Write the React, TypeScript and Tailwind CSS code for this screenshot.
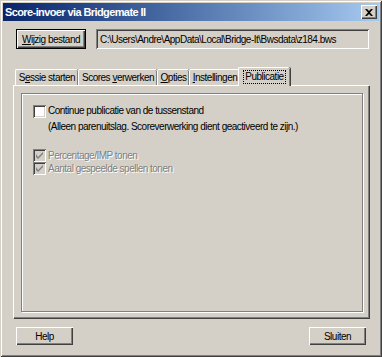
import React from 'react'

const font = "font-['Liberation_Sans',Arial,sans-serif] text-[10px] tracking-[-0.5px]"

const raised =
  'shadow-[inset_1px_1px_0_#ffffff,inset_-1px_-1px_0_#404040,inset_-2px_-2px_0_#808080]'
const sunken =
  'shadow-[inset_1px_1px_0_#808080,inset_-1px_-1px_0_#ffffff,inset_2px_2px_0_#404040,inset_-2px_-2px_0_#d4d0c8]'

type CheckProps = {
  checked?: boolean
  disabled?: boolean
}

const CheckBox: React.FC<CheckProps> = ({ checked, disabled }) => (
  <div
    className={`flex h-[13px] w-[13px] shrink-0 items-center justify-center ${sunken} ${
      disabled ? 'bg-[#d4d0c8]' : 'bg-white'
    }`}
  >
    {checked && (
      <svg width="7" height="7" viewBox="0 0 7 7">
        <path
          d="M0 2v3l2 2l5-5v-2l-5 5z"
          fill={disabled ? '#808080' : '#000000'}
        />
      </svg>
    )}
  </div>
)

type TabProps = {
  label: React.ReactNode
  width: number
  active?: boolean
}

const Tab: React.FC<TabProps> = ({ label, width, active }) => {
  if (active) {
    return (
      <div
        className="relative z-10 -mx-[2px] -mb-px flex h-[19px] items-start justify-center rounded-t-[2px] border-t border-l border-white bg-[#d4d0c8] pt-[2px] shadow-[inset_-1px_0_0_#808080,1px_0_0_#404040]"
        style={{ width: width + 4 }}
      >
        <span className="border border-dotted border-black px-[1px] leading-[12px]">
          {label}
        </span>
      </div>
    )
  }
  return (
    <div
      className="flex h-[16px] items-center justify-center rounded-t-[2px] border-t border-l border-white pb-[1px] shadow-[inset_-1px_0_0_#808080,1px_0_0_#404040]"
      style={{ width }}
    >
      {label}
    </div>
  )
}

const App: React.FC = () => {
  return (
    <div
      className={`flex h-[357px] w-[382px] flex-col bg-[#d4d0c8] p-[3px] text-black ${font} shadow-[inset_1px_1px_0_#d4d0c8,inset_-1px_-1px_0_#404040,inset_2px_2px_0_#ffffff,inset_-2px_-2px_0_#808080]`}
    >
      {/* title bar */}
      <div className="flex h-[18px] items-center justify-between bg-gradient-to-r from-[#0a246a] to-[#a6caf0] pr-[2px] pl-[2px]">
        <span className="text-[11px] font-bold tracking-[-0.6px] text-white">
          Score-invoer via Bridgemate II
        </span>
        <div
          className={`flex h-[14px] w-[16px] items-center justify-center bg-[#d4d0c8] ${raised}`}
        >
          <svg width="8" height="7" viewBox="0 0 8 7">
            <path
              d="M0 0h2l2 2l2-2h2l-3 3.5l3 3.5h-2l-2-2l-2 2h-2l3-3.5z"
              fill="#000"
            />
          </svg>
        </div>
      </div>

      <div className="flex flex-1 flex-col px-[10px]">
        {/* file row */}
        <div className="mt-[8px] flex items-center gap-[10px] pl-[3px]">
          <div className="flex h-[20px] w-[70px] border border-black">
            <div
              className={`flex flex-1 items-center justify-center ${raised}`}
            >
              <span>
                <u>W</u>ijzig bestand
              </span>
            </div>
          </div>
          <div
            className={`flex h-[20px] flex-1 items-center pl-[4px] ${sunken}`}
          >
            C:\Users\Andre\AppData\Local\Bridge-It\Bwsdata\z184.bws
          </div>
        </div>

        {/* tabs */}
        <div className="mt-[18px] flex h-[18px] items-end pl-[2px]">
          <Tab
            width={63}
            label={
              <span>
                S<u>e</u>ssie starten
              </span>
            }
          />
          <Tab
            width={79}
            label={
              <span>
                Scores <u>v</u>erwerken
              </span>
            }
          />
          <Tab
            width={32}
            label={
              <span>
                <u>O</u>pties
              </span>
            }
          />
          <Tab
            width={51}
            label={
              <span>
                <u>I</u>nstellingen
              </span>
            }
          />
          <Tab width={48} active label="Publicatie" />
        </div>

        {/* tab panel */}
        <div className="flex h-[233px] flex-col border-t border-l border-white pt-[7px] pr-[6px] pb-[6px] pl-[7px] shadow-[inset_-1px_-1px_0_#808080,1px_1px_0_#404040]">
          <div className="flex flex-1 flex-col border border-[#808080] pt-[9px] pl-[11px] shadow-[inset_1px_1px_0_#ffffff,1px_1px_0_#ffffff]">
            <div className="flex flex-col leading-[16px]">
              <div className="flex items-center gap-[2px]">
                <CheckBox />
                <span>Continue publicatie van de tussenstand</span>
              </div>
              <div className="pl-[15px]">
                (Alleen parenuitslag. Scoreverwerking dient geactiveerd te zijn.)
              </div>
            </div>
            <div className="mt-[14px] flex flex-col leading-[13px] text-[#808080] [text-shadow:1px_1px_0_#ffffff]">
              <div className="flex items-center gap-[2px]">
                <CheckBox checked disabled />
                <span>Percentage/IMP tonen</span>
              </div>
              <div className="flex items-center gap-[2px]">
                <CheckBox checked disabled />
                <span>Aantal gespeelde spellen tonen</span>
              </div>
            </div>
          </div>
        </div>

        {/* bottom buttons */}
        <div className="mt-[9px] flex justify-between px-[3px]">
          <div
            className={`flex h-[18px] w-[57px] items-center justify-center ${raised}`}
          >
            Help
          </div>
          <div
            className={`flex h-[18px] w-[57px] items-center justify-center ${raised}`}
          >
            Sluiten
          </div>
        </div>
      </div>
    </div>
  )
}

export default App
